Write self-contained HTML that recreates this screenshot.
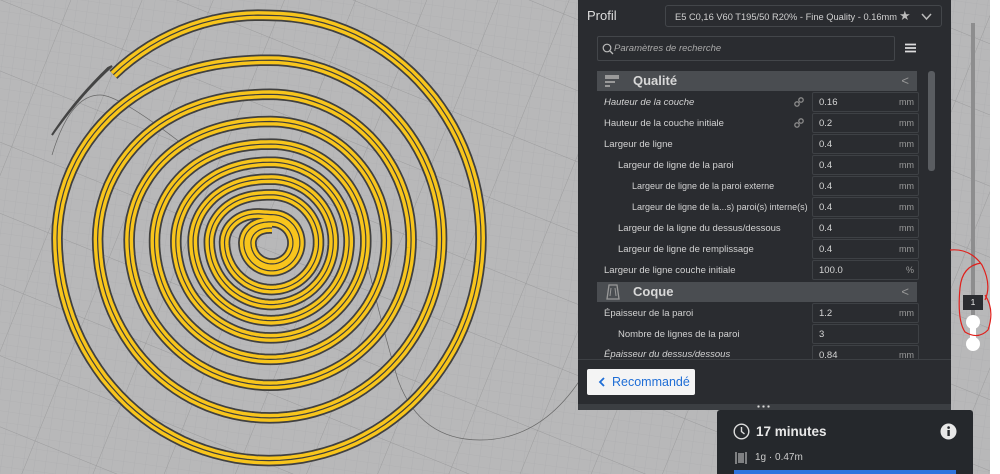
<!DOCTYPE html>
<html><head><meta charset="utf-8"><style>
*{margin:0;padding:0;box-sizing:border-box}
body{width:1000px;height:474px;overflow:hidden;position:relative;background:#b8b8b9;font-family:"Liberation Sans",sans-serif}
.abs{position:absolute}
#panel{left:578px;top:0;width:373px;height:404px;background:#2a2c30}
.t{position:absolute;white-space:nowrap;color:#d2d2d2;font-size:9.5px}
.box{position:absolute;left:234px;width:107px;height:20px;border:1px solid #3e4145;border-radius:2px}
.box .v{position:absolute;left:6px;top:4px;font-size:9.5px;color:#d6d6d6}
.box .u{position:absolute;right:4px;top:4px;font-size:9px;color:#9a9a9a}
.hdr{position:absolute;left:19px;width:320px;height:20px;background:#4a4d51}
.hdr .n{position:absolute;left:36px;top:2px;font-size:13px;font-weight:bold;color:#d8d8d8}
.hdr .c{position:absolute;right:8px;top:2px;font-size:13px;color:#999}
</style></head><body>
<svg class="abs" style="left:0;top:0" width="1000" height="474">
<defs><pattern id="g" width="11" height="11" patternUnits="userSpaceOnUse" patternTransform="rotate(8)"><path d="M11 0V11M0 11H11" stroke="#abacad" stroke-width="0.6" fill="none"/></pattern>
<pattern id="g2" width="66" height="66" patternUnits="userSpaceOnUse" patternTransform="rotate(22)"><path d="M66 0V66M0 66H66" stroke="#929293" stroke-width="0.7" fill="none"/></pattern>
<symbol id="lk" viewBox="0 0 10 10"><circle cx="3" cy="7" r="2.2" stroke="#8a8a8a" stroke-width="1.3" fill="none"/><circle cx="7" cy="3" r="2.2" stroke="#8a8a8a" stroke-width="1.3" fill="none"/></symbol></defs>
<rect width="1000" height="474" fill="url(#g)"/>
<rect width="1000" height="474" fill="url(#g2)"/>
<path d="M52 155 Q70 95 100 95 Q120 95 190 150" stroke="#666" stroke-width="0.7" fill="none"/>
<path d="M362 240 Q380 320 398 380 Q420 440 480 440 Q540 440 580 380" stroke="#666" stroke-width="0.7" fill="none"/>
<path d="M108 68 Q75 100 52 135 Q80 95 112 66Z" fill="#444" stroke="#444" stroke-width="2"/>
<g id="sp" fill="none"></g>
<rect x="990" y="0" width="10" height="474" fill="#fff"/>
</svg>
<script>
(function(){
var R=[212,172,141,116,95,78,62,47,28,21,15];
var d="";var first=true;
for(var th=-135;th<=-90+360*(R.length-1);th+=3){
 var n=(th+90)/360;var i=Math.floor(n);var f=n-i;var r;
 if(i<0){r=R[0]+8*((-90-th)/45);}
 else if(i>=R.length-1){r=R[R.length-1];}
 else{ var ff=f<0.75?0:(f-0.75)/0.25; ff=ff*ff*(3-2*ff); r=R[i]+(R[i+1]-R[i])*ff;}
 var k=Math.min(1,Math.max(0,(212-r)/195));
 var cx=269+3*k,cy=238+5*k;
 var a=th*Math.PI/180;
 var ry=r*(1.05-0.05*k);
 d+=(first?"M":"L")+(cx+r*Math.cos(a)).toFixed(1)+" "+(cy+ry*Math.sin(a)).toFixed(1)+" ";first=false;}
var g=document.getElementById("sp");
g.innerHTML='<path d="'+d+'" stroke="#404040" stroke-width="11.5"/><path d="'+d+'" stroke="#f8c51c" stroke-width="8"/><path d="'+d+'" stroke="#3d3d3d" stroke-width="1.2"/>';
})();
</script>
<div id="panel" class="abs">
 <div class="t" style="left:9px;top:8px;font-size:13px;color:#ddd">Profil</div>
 <div class="abs" style="left:87px;top:5px;width:277px;height:22px;border:1px solid #43464a;border-radius:3px">
  <div class="t" style="left:9px;top:6px;font-size:9.3px;color:#d0d0d0">E5 C0,16 V60 T195/50 R20% - Fine Quality - 0.16mm</div>
  <div class="t" style="left:233px;top:2px;font-size:13px;color:#bbb">★</div>
  <svg class="abs" style="left:255px;top:7px" width="11" height="8"><path d="M1 1L5.5 6L10 1" stroke="#bbb" stroke-width="1.5" fill="none"/></svg>
 </div>
 <div class="abs" style="left:19px;top:36px;width:298px;height:25px;border:1px solid #43464a;border-radius:2px">
  <svg class="abs" style="left:4px;top:6px" width="12" height="12"><circle cx="5" cy="5" r="3.8" stroke="#bbb" stroke-width="1.2" fill="none"/><path d="M8 8L11 11" stroke="#bbb" stroke-width="1.3"/></svg>
  <div class="t" style="left:16px;top:6px;font-style:italic;color:#aaa;font-size:9.5px">Paramètres de recherche</div>
 </div>
 <svg class="abs" style="left:327px;top:43px" width="11" height="10"><path d="M0 1.5H11M0 5H11M0 8.5H11" stroke="#ddd" stroke-width="1.8"/></svg>
 <div class="hdr" style="top:71px"><svg class="abs" style="left:8px;top:4px" width="16" height="14"><rect x="0" y="0" width="14" height="4" fill="#9a9a9a"/><rect x="0" y="6" width="10" height="2" fill="#9a9a9a"/><rect x="0" y="10" width="5" height="2" fill="#9a9a9a"/></svg><div class="n">Qualité</div><div class="c">&lt;</div></div>
 <div class="abs" style="left:350px;top:71px;width:7px;height:100px;background:#5a5d61;border-radius:3px"></div>

 <div class="t" style="left:26px;top:97px;font-style:italic">Hauteur de la couche</div>
 <svg class="abs" style="left:216px;top:97px" width="10" height="10"><use href="#lk"/></svg>
 <div class="box" style="top:92px"><span class="v">0.16</span><span class="u">mm</span></div>
 <div class="t" style="left:26px;top:118px">Hauteur de la couche initiale</div>
 <svg class="abs" style="left:216px;top:118px" width="10" height="10"><use href="#lk"/></svg>
 <div class="box" style="top:113px"><span class="v">0.2</span><span class="u">mm</span></div>
 <div class="t" style="left:26px;top:139px">Largeur de ligne</div>
 <div class="box" style="top:134px"><span class="v">0.4</span><span class="u">mm</span></div>
 <div class="t" style="left:40px;top:160px">Largeur de ligne de la paroi</div>
 <div class="box" style="top:155px"><span class="v">0.4</span><span class="u">mm</span></div>
 <div class="t" style="left:54px;top:181px;font-size:9px">Largeur de ligne de la paroi externe</div>
 <div class="box" style="top:176px"><span class="v">0.4</span><span class="u">mm</span></div>
 <div class="t" style="left:54px;top:202px;font-size:9px">Largeur de ligne de la...s) paroi(s) interne(s)</div>
 <div class="box" style="top:197px"><span class="v">0.4</span><span class="u">mm</span></div>
 <div class="t" style="left:40px;top:223px">Largeur de la ligne du dessus/dessous</div>
 <div class="box" style="top:218px"><span class="v">0.4</span><span class="u">mm</span></div>
 <div class="t" style="left:40px;top:244px">Largeur de ligne de remplissage</div>
 <div class="box" style="top:239px"><span class="v">0.4</span><span class="u">mm</span></div>
 <div class="t" style="left:26px;top:265px">Largeur de ligne couche initiale</div>
 <div class="box" style="top:260px"><span class="v">100.0</span><span class="u">%</span></div>
 <div class="hdr" style="top:282px"><svg class="abs" style="left:9px;top:2px" width="14" height="16"><path d="M3 1H11L13 15H1Z" stroke="#999" stroke-width="1.3" fill="none"/><path d="M5 4L4 12M9 4L10 12" stroke="#999" stroke-width="1"/></svg><div class="n">Coque</div><div class="c">&lt;</div></div>
 <div class="t" style="left:26px;top:308px">Épaisseur de la paroi</div>
 <div class="box" style="top:303px"><span class="v">1.2</span><span class="u">mm</span></div>
 <div class="t" style="left:40px;top:329px">Nombre de lignes de la paroi</div>
 <div class="box" style="top:324px"><span class="v">3</span></div>
 <div class="abs" style="left:0;top:345px;width:373px;height:14px;overflow:hidden">
  <div class="t" style="left:26px;top:4px;font-style:italic">Épaisseur du dessus/dessous</div>
  <div class="box" style="top:0px"><span class="v">0.84</span><span class="u">mm</span></div>
 </div>
 <div class="abs" style="left:0;top:359px;width:373px;height:1px;background:#3d4044"></div>
 <div class="abs" style="left:9px;top:369px;width:108px;height:26px;background:#f4f4f4;border-radius:2px">
  <svg class="abs" style="left:11px;top:8px" width="8" height="10"><path d="M6 1L2 5L6 9" stroke="#1f6ed6" stroke-width="1.8" fill="none"/></svg>
  <div class="t" style="left:25px;top:6px;font-size:12.5px;color:#1f6ed6">Recommandé</div>
 </div>
</div>
<div class="abs" style="left:578px;top:404px;width:373px;height:6px;background:#3b3e42"></div>
<div class="abs" style="left:756px;top:405px;width:14px;height:3px;background:radial-gradient(circle,#ddd 1px,transparent 1.3px) 0 0/5px 3px"></div>
<div class="abs" style="left:717px;top:410px;width:256px;height:64px;background:#25282c;border-radius:3px 3px 0 0">
 <svg class="abs" style="left:16px;top:13px" width="17" height="17"><circle cx="8.5" cy="8.5" r="7.3" stroke="#ddd" stroke-width="1.4" fill="none"/><path d="M8.5 4V8.5L11.5 11" stroke="#ddd" stroke-width="1.4" fill="none"/></svg>
 <div class="t" style="left:39px;top:14px;font-size:13.5px;font-weight:bold;color:#e8e8e8">17 minutes</div>
 <svg class="abs" style="left:223px;top:13px" width="17" height="17"><circle cx="8.5" cy="8.5" r="8" fill="#e8e8e8"/><rect x="7.4" y="7" width="2.4" height="6" fill="#25282c"/><circle cx="8.6" cy="4.6" r="1.3" fill="#25282c"/></svg>
 <svg class="abs" style="left:18px;top:41px" width="12" height="14"><path d="M1 1V13M4 2V12M6 2V12M8 2V12M11 1V13" stroke="#bbb" stroke-width="1.2"/></svg>
 <div class="t" style="left:38px;top:42px;font-size:10px;color:#ccc">1g · 0.47m</div>
 <div class="abs" style="left:17px;top:60px;width:222px;height:4px;background:#2f74de"></div>
</div>
<div class="abs" style="left:971px;top:23px;width:4px;height:322px;background:#8d8d8e"></div>
<div class="abs" style="left:963px;top:295px;width:20px;height:15px;background:#2a2c30;color:#eee;font-size:8.5px;text-align:center;line-height:15px">1</div>
<div class="abs" style="left:970px;top:322px;width:6px;height:22px;background:#fff"></div>
<div class="abs" style="left:966px;top:315px;width:14px;height:14px;border-radius:50%;background:#fff"></div>
<div class="abs" style="left:966px;top:337px;width:14px;height:14px;border-radius:50%;background:#fff"></div>
<svg class="abs" style="left:940px;top:240px" width="60" height="110"><path d="M10 10 Q30 8 42 25 Q52 45 45 60 M41 23 Q22 26 20 48 Q17 80 25 92 Q38 100 48 90 Q55 70 45 55" stroke="#e0201c" stroke-width="1.2" fill="none"/></svg>
</body></html>
